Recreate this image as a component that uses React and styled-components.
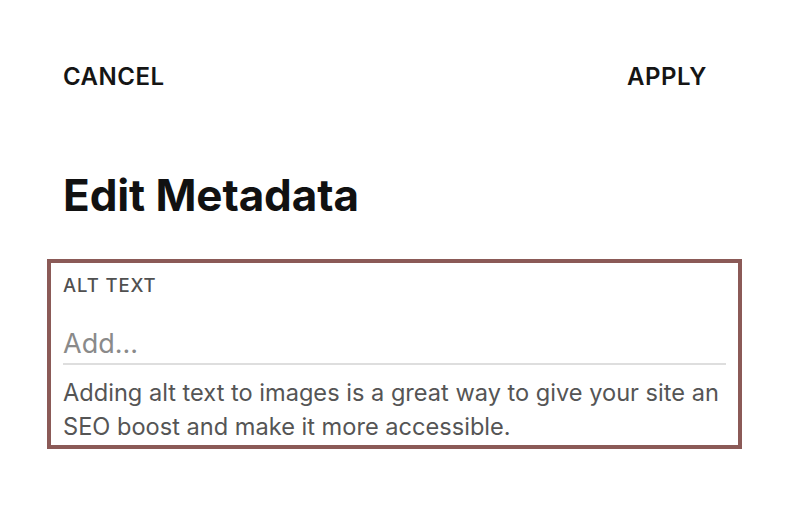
import styled, { createGlobalStyle } from "styled-components";

const GlobalStyle = createGlobalStyle`
  html, body {
    margin: 0;
    padding: 0;
    background: #ffffff;
  }
  body {
    font-family: Inter, "Noto Sans", Arial, sans-serif;
    -webkit-font-smoothing: antialiased;
  }
`;

const Panel = styled.div`
  width: 796px;
  height: 527px;
  box-sizing: border-box;
  padding: 62px 89px 0 63px;
  background: #fff;
  color: #111;
`;

const TopBar = styled.div`
  display: flex;
  justify-content: space-between;
  align-items: center;
  height: 30px;
`;

const BarButton = styled.button`
  border: 0;
  background: none;
  padding: 0;
  font-family: inherit;
  font-size: 24px;
  font-weight: 600;
  letter-spacing: 0.5px;
  color: #151515;
  cursor: pointer;
  line-height: 30px;
`;

const Title = styled.h1`
  margin: 77px 0 0;
  font-size: 44px;
  font-weight: 700;
  line-height: 52px;
  letter-spacing: -0.1px;
  color: #111;
`;

const Field = styled.div`
  margin: 38px 0 0 -16px;
  width: 695px;
  height: 190px;
  box-sizing: border-box;
  border: 4px solid #8b5a57;
  padding: 11px 12px 0 12px;
`;

const Label = styled.label`
  display: block;
  font-size: 18.5px;
  font-weight: 500;
  letter-spacing: 0.9px;
  color: #505050;
  line-height: 22px;
`;

const Input = styled.input`
  display: block;
  width: 100%;
  box-sizing: border-box;
  margin-top: 29px;
  border: 0;
  border-bottom: 2px solid #dedede;
  padding: 0 0 2px;
  font-family: inherit;
  font-size: 27px;
  line-height: 36px;
  height: 40px;
  color: #222;
  outline: none;
  background: transparent;

  &::placeholder {
    color: #8a8a8a;
  }
`;

const Help = styled.p`
  margin: 11px 0 0;
  font-size: 23.6px;
  line-height: 34px;
  color: #555;
`;

export default function App() {
  return (
    <>
      <GlobalStyle />
      <Panel>
        <TopBar>
          <BarButton>CANCEL</BarButton>
          <BarButton>APPLY</BarButton>
        </TopBar>
        <Title>Edit Metadata</Title>
        <Field>
          <Label htmlFor="alt">ALT TEXT</Label>
          <Input id="alt" placeholder="Add..." />
          <Help>
            Adding alt text to images is a great way to give your site an SEO
            boost and make it more accessible.
          </Help>
        </Field>
      </Panel>
    </>
  );
}
